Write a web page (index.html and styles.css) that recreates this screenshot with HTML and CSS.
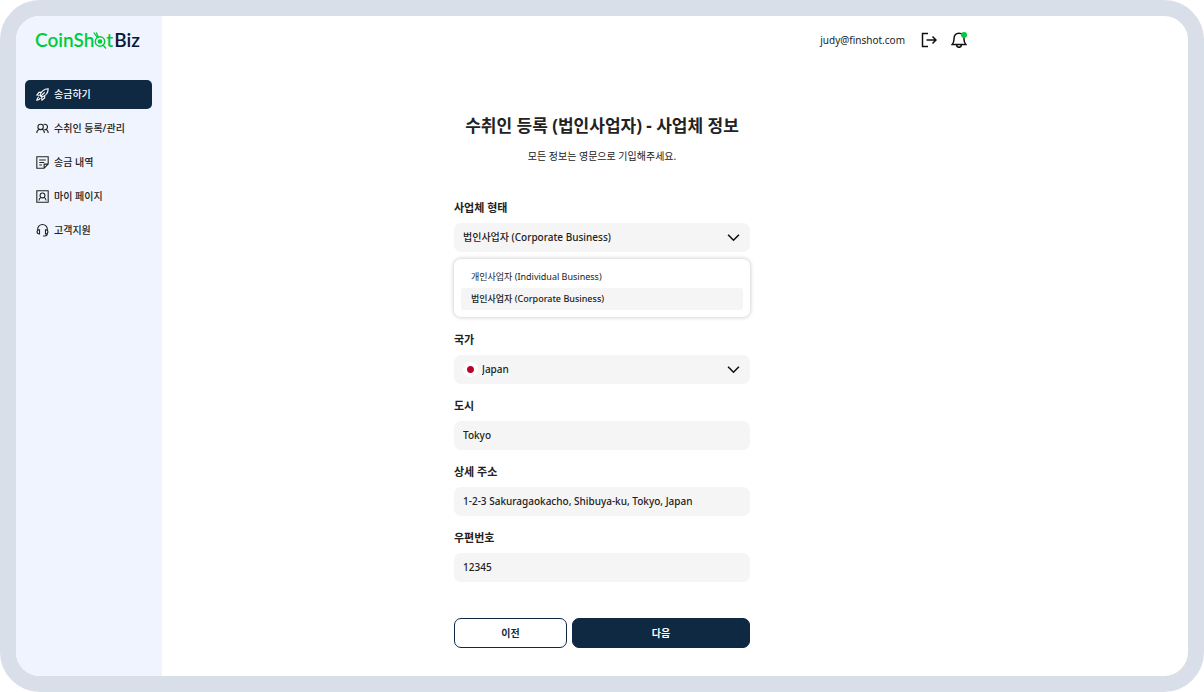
FILE: index.html
```html
<!DOCTYPE html>
<html lang="ko">
  <head>
    <meta charset="UTF-8" />
    <meta name="viewport" content="width=device-width, initial-scale=1.0" />
    <title>CoinShotBiz - 수취인 등록</title>
    <link rel="stylesheet" href="styles.css">
  </head>
  <body>
    <div class="app">
      <aside class="sidebar">
        <a href="#" class="logo" aria-label="CoinShotBiz">
          <span>CoinSh</span>
          <svg class="logo-target" viewBox="0 0 14 20" fill="none" stroke="currentColor">
            <circle cx="7" cy="11.500" r="4.700" stroke-width="1.500" />
            <circle cx="7" cy="11.500" r="2.300" fill="currentColor" stroke="none" />
            <path d="M.8 2.500 4.600 8M3.200 2.500 5.500 7.500M9.500 14.500l3.500 4" stroke-width="1.300" />
          </svg>
          <span>t</span>
          <span class="logo-biz">Biz</span>
        </a>

        <nav class="menu">
          <a href="#" class="menu-item active">
            <svg class="icon" viewBox="0 0 24 24">
              <path d="M7.500 13C9.500 6.500 15 2 22.500 1.500c0 7.500-5 13-11.500 15zM10 8H5.500L1.500 13l6 .5M16 14v4.500L11 22.500 10.500 16.500M5.500 16C3 17 2 19 1.500 22.500c3.500-.5 5.500-1.500 6.500-4M16 8l-8 8" />
            </svg>
            <span>송금하기</span>
          </a>
          <a href="#" class="menu-item">
            <svg class="icon" viewBox="0 0 24 24">
              <circle cx="8.500" cy="9" r="5" />
              <path d="M1.500 20.500c0-3.500 2-6 4.500-7M11 13c2.500 1 4.500 3.500 4.500 7.500M14 4.600A5 5 0 1 1 15.500 14M18 13.500c2.500 1 4.500 3.500 4.500 7" />
            </svg>
            <span>수취인 등록/관리</span>
          </a>
          <a href="#" class="menu-item">
            <svg class="icon" viewBox="0 0 24 24">
              <path d="M15 22.500H1.500v-21h21V15zM15 22.500V15h7.500M6 7.500h12M6 12h9M6 16.500h5" />
            </svg>
            <span>송금 내역</span>
          </a>
          <a href="#" class="menu-item">
            <svg class="icon" viewBox="0 0 24 24">
              <path d="M1.500 1.500h21v21h-21zM5.500 19.500c0-3.500 2-5 4-5.500M14.500 14c2 .5 4 2 4 5.500" />
              <circle cx="12" cy="10" r="4.500" />
            </svg>
            <span>마이 페이지</span>
          </a>
          <a href="#" class="menu-item">
            <svg class="icon" viewBox="0 0 24 24">
              <path d="M3 12V10a9 9 0 0 1 18 0v2M21 17c0 3-2 5-5 5h-3M6.500 10.500v8C3.500 18.500 2 17 2 14.500s1.500-4 4.500-4zM17.500 10.500v8c3 0 4.500-1.500 4.500-4s-1.500-4-4.500-4z" />
            </svg>
            <span>고객지원</span>
          </a>
        </nav>
      </aside>

      <main class="main">
        <header class="topbar">
          <span class="user-email">judy@finshot.com</span>
          <button type="button" class="icon-btn" aria-label="로그아웃">
            <svg viewBox="0 0 16 16">
              <path d="M7 1.500H1.500v13H7M5.500 8H15M11.500 4.500 15 8l-3.500 3.500" />
            </svg>
          </button>
          <button type="button" class="icon-btn bell" aria-label="알림">
            <svg viewBox="0 0 16 16">
              <path d="M1.200 12.500h13.600c-1.300-1.500-1.800-3-1.800-5.500 0-3.500-2-5.800-5-5.800S3 3.500 3 7c0 2.500-.5 4-1.800 5.500zM5.500 13c.3 1.500 1.200 2.300 2.500 2.300s2.200-.8 2.500-2.300" />
            </svg>
            <span class="bell-dot"></span>
          </button>
        </header>

        <form class="register-form">
          <h1 class="title">수취인 등록 (법인사업자) - 사업체 정보</h1>
          <p class="subtitle">모든 정보는 영문으로 기입해주세요.</p>

          <div class="field">
            <label for="business-type">사업체 형태</label>
            <div class="select-box">
              <select id="business-type">
                <option>개인사업자 (Individual Business)</option>
                <option selected>법인사업자 (Corporate Business)</option>
              </select>
              <svg class="chevron" viewBox="0 0 12 12"><path d="m1 3.500 5 5 5-5" /></svg>
            </div>
            <div class="options" role="listbox" aria-label="사업체 형태">
              <button type="button" class="option" role="option" aria-selected="false">개인사업자 (Individual Business)</button>
              <button type="button" class="option selected" role="option" aria-selected="true">법인사업자 (Corporate Business)</button>
            </div>
          </div>

          <div class="field">
            <label for="country">국가</label>
            <div class="select-box with-flag">
              <span class="flag"></span>
              <select id="country">
                <option>Japan</option>
              </select>
              <svg class="chevron" viewBox="0 0 12 12"><path d="m1 3.500 5 5 5-5" /></svg>
            </div>
          </div>

          <div class="field">
            <label for="city">도시</label>
            <input type="text" id="city" value="Tokyo" />
          </div>

          <div class="field">
            <label for="address">상세 주소</label>
            <input type="text" id="address" value="1-2-3 Sakuragaokacho, Shibuya-ku, Tokyo, Japan" />
          </div>

          <div class="field">
            <label for="zipcode">우편번호</label>
            <input type="text" id="zipcode" value="12345" />
          </div>

          <div class="actions">
            <button type="button" class="btn btn-prev">이전</button>
            <button type="submit" class="btn btn-next">다음</button>
          </div>
        </form>
      </main>
    </div>
  </body>
</html>
```
FILE: styles.css
```css
* {
  box-sizing: border-box;
}

body {
  margin: 0;
  background-color: #fff;
  color: #222;
  font-family: "Noto Sans", "Noto Sans CJK KR", sans-serif;
  font-size: 10px;
  font-weight: 500;
  line-height: 16px;
}

button,
input,
select {
  font: inherit;
  color: inherit;
}

.app {
  display: flex;
  min-height: 100vh;
  border: 16px solid #d8dfe9;
  border-radius: 40px;
  overflow: hidden;
}

/* Sidebar */
.sidebar {
  flex: none;
  width: 146px;
  padding: 12px 10px 20px 9px;
  background-color: #eff4fe;
}

.logo {
  display: flex;
  align-items: center;
  height: 24px;
  margin: 0 0 28px 10px;
  color: #00cb3c;
  font-family: Lato, sans-serif;
  font-size: 19px;
  font-weight: 600;
  text-decoration: none;
}

.logo-target {
  flex: none;
  width: 14px;
  height: 20px;
  margin: 0 -1px;
}

.logo-biz {
  margin-left: 1px;
  color: #06173a;
}

.menu {
  display: flex;
  flex-direction: column;
  gap: 5px;
}

.menu-item {
  display: flex;
  align-items: center;
  gap: 5px;
  height: 29px;
  padding: 0 11px;
  border-radius: 5px;
  color: #222;
  line-height: 15px;
  text-decoration: none;
}

.menu-item.active {
  background-color: #0f2943;
  color: #fff;
}

.icon {
  width: 13px;
  height: 13px;
  fill: none;
  stroke: currentColor;
  stroke-width: 2;
}

/* Main area */
.main {
  flex: 1;
  padding-right: 146px;
}

.topbar {
  display: flex;
  justify-content: flex-end;
  align-items: center;
  gap: 14px;
  height: 48px;
  padding-right: 75px;
}

.user-email {
  margin-right: 2px;
  font-weight: 400;
}

.icon-btn {
  position: relative;
  width: 16px;
  height: 16px;
  padding: 0;
  border: none;
  background: none;
  cursor: pointer;
}

.icon-btn svg {
  display: block;
  fill: none;
  stroke: #111;
  stroke-width: 1.5;
}

.bell-dot {
  position: absolute;
  top: 0;
  right: 0;
  width: 6px;
  height: 6px;
  border-radius: 50%;
  background-color: #00cb3c;
}

/* Form */
.register-form {
  display: flex;
  flex-direction: column;
  gap: 14px;
  width: 296px;
  margin: 0 auto;
  padding: 50px 0 28px;
}

.title {
  margin: 0 -10px;
  font-size: 17px;
  font-weight: 700;
  line-height: 24px;
  text-align: center;
}

.subtitle {
  margin: -4px 0 22px;
  font-weight: 400;
  text-align: center;
}

.field {
  display: flex;
  flex-direction: column;
  gap: 7px;
}

.field label {
  font-size: 11px;
  font-weight: 600;
}

.field input,
.field select {
  width: 100%;
  height: 29px;
  padding: 0 9px 1px;
  border: none;
  border-radius: 7px;
  background-color: #f5f5f5;
  appearance: none;
}

.field input:focus,
.field select:focus {
  outline: 1px solid #0f2943;
}

.select-box {
  position: relative;
  display: flex;
}

.field .with-flag select {
  padding-left: 28px;
}

.flag {
  position: absolute;
  top: 7px;
  left: 9px;
  width: 15px;
  height: 15px;
  border-radius: 50%;
  background: radial-gradient(circle, #bc0026 3px, #fff 4px);
}

.chevron {
  position: absolute;
  top: 8px;
  right: 10px;
  width: 13px;
  height: 13px;
  fill: none;
  stroke: #111;
  stroke-width: 1.5;
  pointer-events: none;
}

.options {
  display: flex;
  flex-direction: column;
  margin-bottom: 1px;
  padding: 7px;
  border-radius: 7px;
  background-color: #fff;
  box-shadow: 0 0 4px rgba(0, 0, 0, 0.25);
}

.option {
  height: 22px;
  padding: 0 10px 1px;
  border: none;
  border-radius: 3px;
  background: none;
  font-size: 9px;
  font-weight: 400;
  text-align: left;
}

.option.selected {
  background-color: #f5f5f5;
  font-weight: 500;
}

.actions {
  display: flex;
  gap: 5px;
  margin-top: 22px;
}

.btn {
  height: 30px;
  padding: 0;
  border: 1px solid #0f2943;
  border-radius: 7px;
  font-weight: 600;
  cursor: pointer;
}

.btn-prev {
  flex: 113;
  background-color: #fff;
  color: #0f2943;
}

.btn-next {
  flex: 179;
  background-color: #0f2943;
  color: #fff;
}
```
